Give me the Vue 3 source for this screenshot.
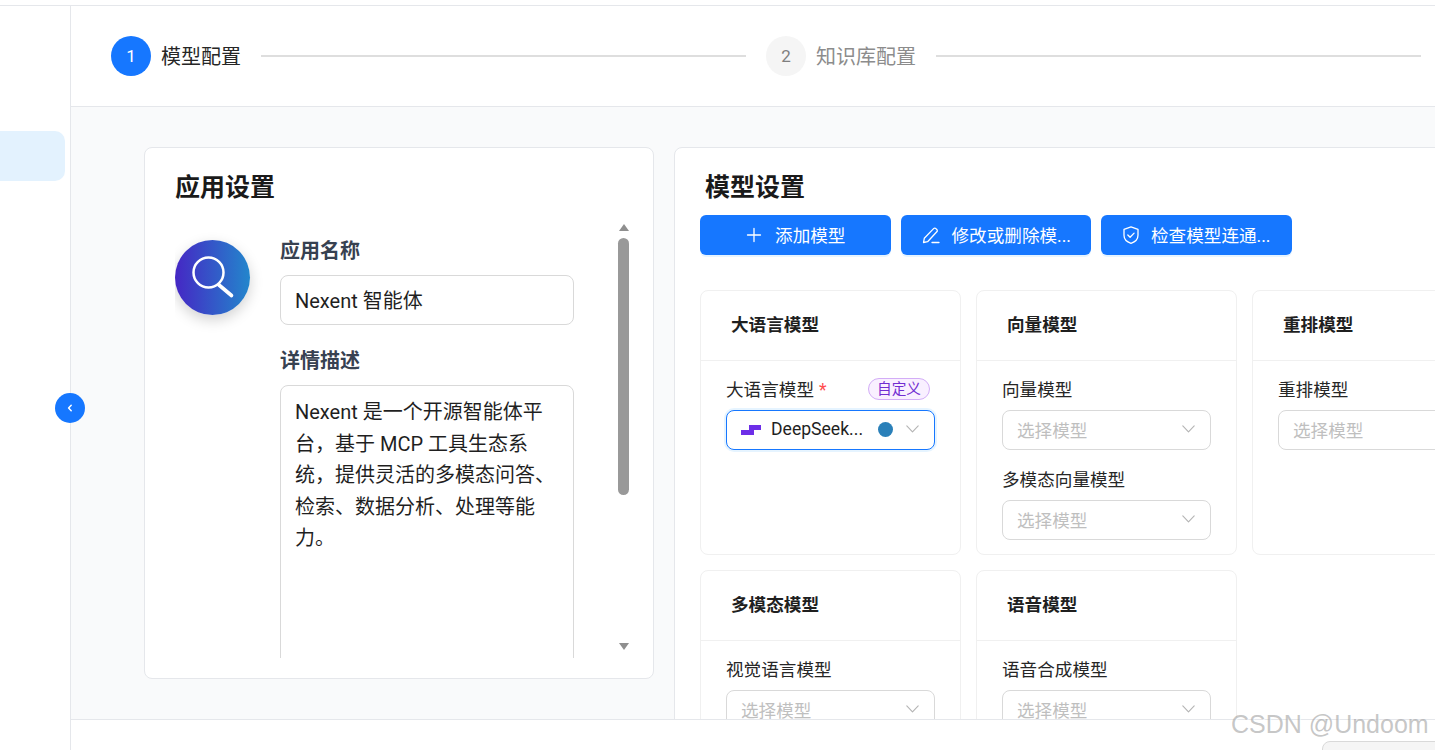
<script setup>
const steps = [
  { num: 1, label: '模型配置', active: true },
  { num: 2, label: '知识库配置', active: false }
]

const actions = [
  { key: 'add', label: '添加模型' },
  { key: 'edit', label: '修改或删除模...' },
  { key: 'check', label: '检查模型连通...' }
]

const groups = [
  { title: '大语言模型', fields: [{ label: '大语言模型', required: true, custom: true, value: 'DeepSeek...' }] },
  { title: '向量模型', fields: [{ label: '向量模型' }, { label: '多模态向量模型' }] },
  { title: '重排模型', fields: [{ label: '重排模型' }] },
  { title: '多模态模型', fields: [{ label: '视觉语言模型' }] },
  { title: '语音模型', fields: [{ label: '语音合成模型' }] }
]
</script>

<template>
  <div class="page">
    <aside class="sidebar">
      <div class="nav-item"></div>
      <button class="collapse">
        <svg width="12" height="12" viewBox="0 0 12 12" fill="none" stroke="#fff" stroke-width="1.5" stroke-linecap="round" stroke-linejoin="round"><path d="M7.2 3.2 4.6 6l2.6 2.8" /></svg>
      </button>
    </aside>

    <div class="content">
      <header class="steps">
        <template v-for="s in steps" :key="s.num">
          <span :class="['step-num', { active: s.active }]">{{ s.num }}</span>
          <span :class="['step-label', { active: s.active }]">{{ s.label }}</span>
          <span class="step-line"></span>
        </template>
      </header>

      <main class="main">
        <section class="panel app-panel">
          <h2 class="panel-title">应用设置</h2>
          <div class="app-body">
            <div class="avatar">
              <svg width="44" height="44" viewBox="0 0 44 44" fill="none" stroke="#fff" stroke-linecap="round">
                <circle cx="17.5" cy="16.5" r="15" stroke-width="2.5" />
                <path d="M28 29l12.5 10.5" stroke-width="3.6" />
              </svg>
            </div>
            <div class="app-form">
              <label class="app-label">应用名称</label>
              <div class="app-input">Nexent 智能体</div>
              <label class="app-label second">详情描述</label>
              <div class="app-textarea">Nexent 是一个开源智能体平台，基于 MCP 工具生态系统，提供灵活的多模态问答、检索、数据分析、处理等能力。</div>
            </div>
            <div class="scrollbar">
              <span class="arrow up"></span>
              <span class="thumb"></span>
              <span class="arrow down"></span>
            </div>
          </div>
        </section>

        <section class="panel model-panel">
          <h2 class="panel-title">模型设置</h2>
          <div class="actions">
            <button v-for="a in actions" :key="a.key" class="action">
              <svg v-if="a.key === 'add'" width="16" height="16" viewBox="0 0 16 16" fill="none" stroke="#fff" stroke-width="1.3" stroke-linecap="round"><path d="M8 1.5v13M1.5 8h13" /></svg>
              <svg v-else-if="a.key === 'edit'" width="20" height="20" viewBox="0 0 20 20" fill="none" stroke="#fff" stroke-width="1.3" stroke-linecap="round" stroke-linejoin="round"><path d="M2.5 17.5l.8-4.2L12.6 3.6a1.6 1.6 0 0 1 2.3 0l.9.9a1.6 1.6 0 0 1 0 2.3L6.6 16.7l-4.1.8zM11 17.5h7" /></svg>
              <svg v-else width="18" height="20" viewBox="0 0 18 20" fill="none" stroke="#fff" stroke-width="1.3" stroke-linecap="round" stroke-linejoin="round"><path d="M9 1.8l7 2.5v6c0 4-3 6.7-7 8-4-1.3-7-4-7-8v-6l7-2.5z" /><path d="M5.8 10l2.3 2.3 4-4.2" /></svg>
              <span class="action-text">{{ a.label }}</span>
            </button>
          </div>

          <div class="groups">
            <div v-for="g in groups" :key="g.title" class="group">
              <div class="group-head">{{ g.title }}</div>
              <div class="group-body">
                <div v-for="f in g.fields" :key="f.label" class="field">
                  <div class="field-top">
                    <span class="field-label">{{ f.label }}<i v-if="f.required" class="req">*</i></span>
                    <span v-if="f.custom" class="tag">自定义</span>
                  </div>
                  <div :class="['select', { filled: f.value }]">
                    <template v-if="f.value">
                      <svg class="ds-logo" width="20" height="10" viewBox="0 0 20 10" fill="#6d2ee8"><path d="M0 5h8V0h12v5h-7v5H0z" /></svg>
                      <span class="select-value">{{ f.value }}</span>
                      <span class="dot"></span>
                    </template>
                    <span v-else class="placeholder">选择模型</span>
                    <svg class="chev" width="13" height="8" viewBox="0 0 13 8" fill="none" stroke="#b4b4b4" stroke-width="1.1" stroke-linecap="round" stroke-linejoin="round"><path d="M.8.8l5.7 6 5.7-6" /></svg>
                  </div>
                </div>
              </div>
            </div>
          </div>
        </section>
      </main>

      <footer class="footer">
        <span class="footer-btn"></span>
      </footer>
    </div>

    <div class="watermark">CSDN @Undoom</div>
  </div>
</template>

<style>
html, body { margin: 0; overflow: hidden; background: #fff; }
</style>

<style scoped>
.page {
  position: relative;
  display: flex;
  height: 744px;
  margin-top: 5px;
  border-top: 1px solid #e5e7eb;
  overflow: hidden;
  font-family: Roboto, "Noto Sans CJK SC", sans-serif;
  color: #1f1f1f;
  background: #fff;
}

.sidebar {
  position: relative;
  flex: none;
  width: 70px;
  border-right: 1px solid #e5e7eb;
  padding-top: 125px;
  box-sizing: content-box;
}
.nav-item {
  width: 65px;
  height: 50px;
  background: #e3f2fe;
  border-radius: 0 10px 10px 0;
}
.collapse {
  position: absolute;
  left: 55px;
  top: 387px;
  width: 30px;
  height: 30px;
  padding: 0;
  border: none;
  border-radius: 50%;
  background: #1677ff;
  display: flex;
  align-items: center;
  justify-content: center;
  z-index: 2;
}

.content {
  flex: 1;
  min-width: 0;
  display: flex;
  flex-direction: column;
}

.steps {
  flex: none;
  height: 101px;
  box-sizing: border-box;
  padding: 0 14px 0 40px;
  display: flex;
  align-items: center;
  border-bottom: 1px solid #e5e7eb;
}
.step-num {
  flex: none;
  width: 40px;
  height: 40px;
  border-radius: 50%;
  background: #f5f5f5;
  color: #7f7f7f;
  font-size: 17px;
  display: flex;
  align-items: center;
  justify-content: center;
  margin-right: 10px;
}
.step-num.active { background: #1677ff; color: #fff; }
.step-label {
  flex: none;
  font-size: 20px;
  line-height: 28px;
  padding-top: 1px;
  color: #8c8c8c;
  margin-right: 20px;
}
.step-label.active { color: #262626; }
.step-line {
  flex: 1;
  height: 2px;
  background: #dedede;
  margin-right: 20px;
}
.step-line:last-child { margin-right: 0; }

.main {
  flex: none;
  height: 612px;
  box-sizing: border-box;
  padding: 40px 0 0 73px;
  display: flex;
  gap: 20px;
  background: #f9fafb;
  overflow: hidden;
}

.panel {
  flex: none;
  box-sizing: border-box;
  background: #fff;
  border: 1px solid #e5e7eb;
  border-radius: 8px;
}
.panel-title {
  margin: 0;
  font-size: 25px;
  line-height: 32px;
  padding-top: 1px;
  font-weight: 600;
  color: #1a1a1a;
}

.app-panel {
  width: 510px;
  height: 532px;
  padding: 23px 24px 0 30px;
}
.app-body {
  display: flex;
  margin-top: 7px;
  height: 447px;
  overflow: hidden;
}
.avatar {
  flex: none;
  width: 75px;
  height: 75px;
  margin: 29px 30px 0 0;
  border-radius: 50%;
  background: linear-gradient(90deg, #4527c4, #2386cc);
  box-shadow: 0 5px 14px rgba(0, 0, 0, 0.18);
  display: flex;
  align-items: center;
  justify-content: center;
}
.app-form {
  flex: none;
  width: 294px;
  padding-top: 27px;
}
.app-label {
  display: block;
  font-size: 20px;
  line-height: 26px;
  font-weight: 600;
  color: #374151;
}
.app-label.second { margin-top: 23px; }
.app-input {
  margin-top: 11px;
  height: 50px;
  box-sizing: border-box;
  padding: 1px 14px 0;
  border: 1px solid #d9d9d9;
  border-radius: 8px;
  font-size: 20px;
  line-height: 48px;
}
.app-textarea {
  margin-top: 11px;
  height: 340px;
  box-sizing: border-box;
  padding: 11px 14px;
  border: 1px solid #d9d9d9;
  border-radius: 8px;
  font-size: 20px;
  line-height: 31.5px;
}
.scrollbar {
  flex: none;
  width: 11px;
  margin-left: 44px;
  display: flex;
  flex-direction: column;
  align-items: center;
  padding-top: 13px;
}
.thumb {
  width: 11px;
  height: 257px;
  margin: 7px 0 148px;
  border-radius: 6px;
  background: #999;
}
.arrow {
  flex: none;
  width: 0;
  height: 0;
  border-left: 5px solid transparent;
  border-right: 5px solid transparent;
}
.arrow.up { border-bottom: 7px solid #8f8f8f; }
.arrow.down { border-top: 7px solid #8f8f8f; }

.model-panel {
  width: 900px;
  height: 700px;
  padding: 23px 0 0 25px;
}
.model-panel .panel-title { padding-left: 5px; }
.actions {
  display: flex;
  gap: 10px;
  margin-top: 11px;
}
.action {
  width: 190.5px;
  height: 40px;
  padding: 0;
  border: none;
  border-radius: 6px;
  background: #1677ff;
  box-shadow: 0 2px 0 rgba(5, 145, 255, 0.1);
  color: #fff;
  font: inherit;
  font-size: 17.6px;
  display: flex;
  align-items: center;
  justify-content: center;
  gap: 11px;
}
.action-text { margin-top: -1px; }
.action:nth-child(1) svg { margin-right: 2px; margin-left: 1px; }

.groups {
  display: grid;
  grid-template-columns: repeat(3, 261px);
  grid-template-rows: 265px 265px;
  gap: 15px;
  margin-top: 35px;
}
.group {
  box-sizing: border-box;
  border: 1px solid #f0f0f0;
  border-radius: 8px;
  background: #fff;
}
.group-head {
  height: 70px;
  box-sizing: border-box;
  padding-left: 30px;
  border-bottom: 1px solid #f0f0f0;
  font-size: 17.6px;
  font-weight: 600;
  line-height: 68px;
  color: #1f1f1f;
}
.group-body { padding: 16px 25px 0; }
.field + .field { margin-top: 17px; }
.field-top {
  display: flex;
  align-items: center;
  justify-content: space-between;
  height: 24px;
  margin-bottom: 9px;
}
.field-label {
  font-size: 17.6px;
  line-height: 24px;
  padding-top: 1px;
  color: #262626;
}
.req {
  margin-left: 5px;
  font-style: normal;
  color: #ff4d4f;
}
.tag {
  height: 20px;
  margin-right: 5px;
  padding: 0 8px;
  border: 1px solid #d3adf7;
  border-radius: 11px;
  background: #f9f0ff;
  color: #722ed1;
  font-size: 14.67px;
  line-height: 20px;
}
.select {
  position: relative;
  height: 40px;
  box-sizing: border-box;
  padding: 0 15px 0 14px;
  display: flex;
  align-items: center;
  border: 1px solid #d9d9d9;
  border-radius: 8px;
  background: #fff;
  font-size: 17.6px;
}
.select.filled {
  border-color: #1677ff;
  box-shadow: 0 0 0 2px rgba(5, 145, 255, 0.1);
}
.ds-logo { flex: none; margin-right: 10px; }
.select-value { flex: 1; margin-top: -2px; color: #1f1f1f; }
.dot {
  flex: none;
  width: 15px;
  height: 15px;
  margin-right: 13px;
  margin-top: -2px;
  border-radius: 50%;
  background: #2a80b9;
}
.placeholder { flex: 1; margin-top: -2px; color: #bfbfbf; }
.chev { flex: none; margin-top: -2px; }

.footer {
  flex: 1;
  position: relative;
  border-top: 1px solid #e5e7eb;
  background: #fff;
  z-index: 1;
}
.footer-btn {
  position: absolute;
  left: 1251px;
  top: 21px;
  width: 120px;
  height: 40px;
  border: 1px solid #d9d9d9;
  border-radius: 8px;
  background: #f5f5f5;
}

.watermark {
  position: absolute;
  left: 1231px;
  top: 701px;
  z-index: 3;
  font-family: "Liberation Sans", Arial, sans-serif;
  font-size: 25px;
  line-height: 34px;
  color: rgba(150, 150, 150, 0.55);
  text-shadow: 1px 1px 1px rgba(255, 255, 255, 0.7);
  white-space: nowrap;
}
</style>
